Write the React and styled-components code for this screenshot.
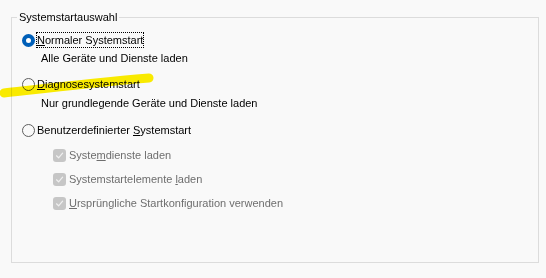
import styled, { createGlobalStyle } from 'styled-components'

const GlobalStyle = createGlobalStyle`
    html, body {
        margin: 0;
        padding: 0;
        background: #f9f9f9;
    }
    body {
        font-family: "Liberation Sans", Arial, sans-serif;
        font-size: 11px;
        color: #000;
    }
`

const App = () => {
    return <Page>
        <GlobalStyle />
        <GroupBox>
            <Legend>Systemstartauswahl</Legend>
            <Options>
                <RadioRow $gap={0}>
                    <Radio $checked />
                    <FocusLabel><Key>N</Key>ormaler Systemstart</FocusLabel>
                </RadioRow>
                <Description $gap={2}>Alle Geräte und Dienste laden</Description>

                <RadioRow $gap={10}>
                    <Radio />
                    <Label><Key>D</Key>iagnosesystemstart</Label>
                </RadioRow>
                <Description $gap={3}>Nur grundlegende Geräte und Dienste laden</Description>

                <RadioRow $gap={11}>
                    <Radio />
                    <Label>Benutzerdefinierter <Key>S</Key>ystemstart</Label>
                </RadioRow>
                <CheckRow $gap={9}>
                    <CheckBox />
                    <Label $disabled>Syste<Key>m</Key>dienste laden</Label>
                </CheckRow>
                <CheckRow $gap={8}>
                    <CheckBox />
                    <Label $disabled>Systemstartelemente <Key>l</Key>aden</Label>
                </CheckRow>
                <CheckRow $gap={8}>
                    <CheckBox />
                    <Label $disabled><Key>U</Key>rsprüngliche Startkonfiguration verwenden</Label>
                </CheckRow>
            </Options>
        </GroupBox>
        <Highlight viewBox='0 0 160 30' width='160' height='30'>
            <path d='M4 23 C 40 19, 90 13, 149 8' stroke='#fff000' strokeWidth='9'
                  strokeLinecap='round' fill='none' />
        </Highlight>
    </Page>
}

const Check = () => (
    <svg width='9' height='9' viewBox='0 0 9 9'>
        <path d='M1.5 4.8 L3.6 6.8 L7.6 2.2' stroke='#f0f0f0' strokeWidth='1.2' fill='none'
              strokeLinecap='round' strokeLinejoin='round' />
    </svg>
)

const CheckBox = () => <Box><Check /></Box>

const Page = styled.div`
    position: relative;
    width: 546px;
    height: 278px;
    padding: 10px 7px 7px 11px;
    box-sizing: border-box;
`

const GroupBox = styled.fieldset`
    margin: 0;
    padding: 0 0 0 5px;
    border: 1px solid #dcdcdc;
    height: 253px;
    box-sizing: border-box;
`

const Legend = styled.legend`
    padding: 0 2px;
    line-height: 15px;
    color: #000;
`

const Options = styled.div`
    display: flex;
    flex-direction: column;
    padding: 7px 0 0 5px;
`

const RadioRow = styled.div`
    display: flex;
    align-items: center;
    height: 16px;
    gap: 2px;
    margin-top: ${p => p.$gap}px;
`

const CheckRow = styled(RadioRow)`
    padding-left: 31px;
    gap: 3px;
`

const Radio = styled.span`
    width: 13px;
    height: 13px;
    border-radius: 50%;
    box-sizing: border-box;
    flex: none;
    background: ${p => p.$checked ? '#ffffff' : 'transparent'};
    border: ${p => p.$checked ? '4px solid #005fb8' : '1px solid #5f5f5f'};
`

const Label = styled.span`
    line-height: 16px;
    white-space: nowrap;
    color: ${p => p.$disabled ? '#6e6e6e' : '#000'};
`

const FocusLabel = styled(Label)`
    outline: 1px dotted #000;
    outline-offset: -1px;
    padding: 0 1px;
    margin-left: -1px;
`

const Key = styled.span`
    text-decoration: underline;
    text-underline-offset: 1px;
`

const Description = styled.div`
    line-height: 16px;
    height: 16px;
    padding-left: 19px;
    margin-top: ${p => p.$gap}px;
    white-space: nowrap;
`

const Box = styled.span`
    width: 13px;
    height: 13px;
    border-radius: 3px;
    background: #c6c6c6;
    display: flex;
    align-items: center;
    justify-content: center;
    flex: none;
`

const Highlight = styled.svg`
    position: absolute;
    left: 0;
    top: 70px;
    mix-blend-mode: multiply;
    pointer-events: none;
`

export default App
